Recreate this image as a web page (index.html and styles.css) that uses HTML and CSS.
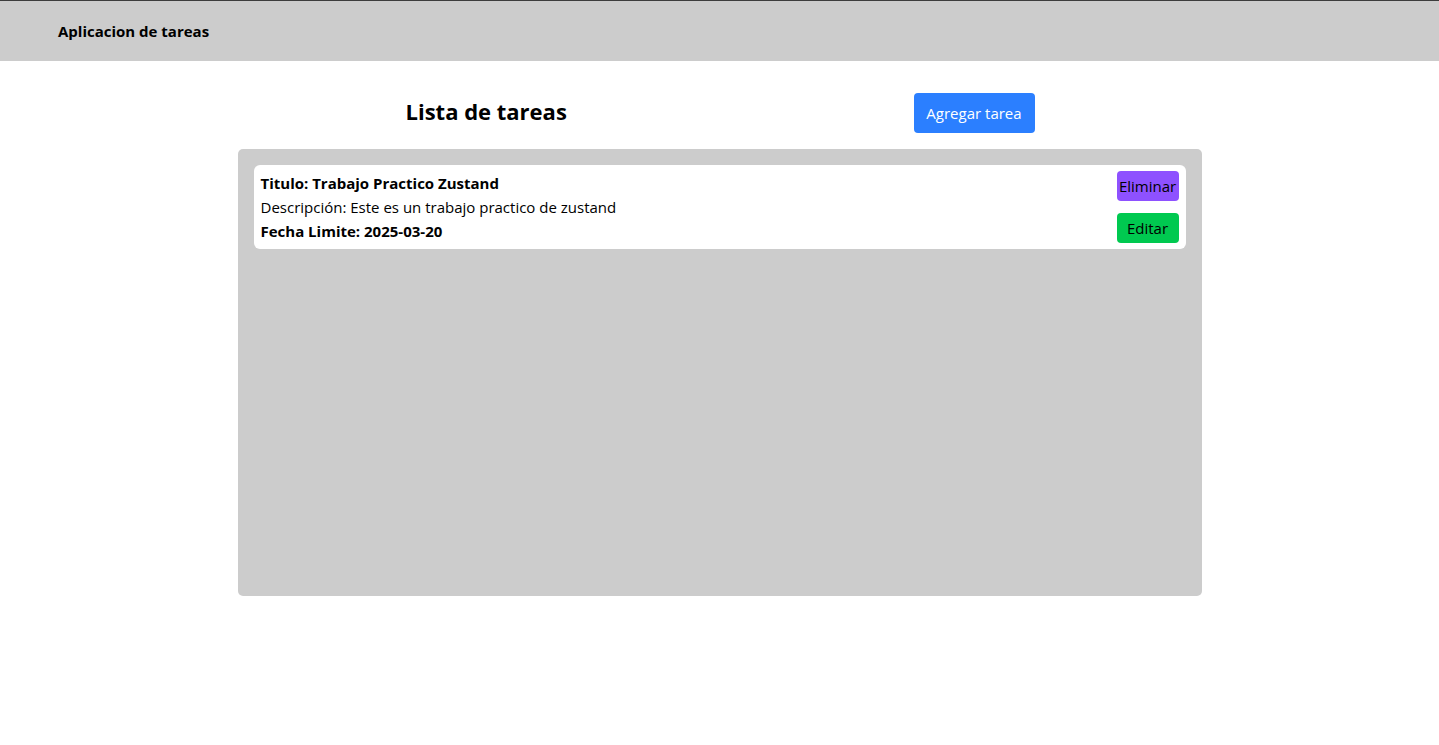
FILE: index.html
```html
<!DOCTYPE html>
<html lang="es">
<head>
<meta charset="utf-8">
<title>Aplicacion de tareas</title>
<link rel="stylesheet" href="styles.css">
</head>
<body>
<header class="topbar">
  <h1 class="brand">Aplicacion de tareas</h1>
</header>
<main class="main">
  <div class="list-head">
    <h2 class="list-title">Lista de tareas</h2>
    <button class="btn btn-add">Agregar tarea</button>
  </div>
  <section class="board">
    <article class="task">
      <div class="task-info">
        <p class="task-title">Titulo: Trabajo Practico Zustand</p>
        <p class="task-desc">Descripción: Este es un trabajo practico de zustand</p>
        <p class="task-date">Fecha Limite: 2025-03-20</p>
      </div>
      <div class="task-actions">
        <button class="btn btn-delete">Eliminar</button>
        <button class="btn btn-edit">Editar</button>
      </div>
    </article>
  </section>
</main>
</body>
</html>
```

FILE: styles.css
```css
* { box-sizing: border-box; }
html, body { margin: 0; padding: 0; }
body {
  font-family: "Open Sans", "Noto Sans", sans-serif;
  color: #000;
  background: #fff;
  font-size: 15px;
  line-height: 24px;
}
.topbar {
  height: 61px;
  border-top: 1px solid #3c3c3c;
  background: #cccccc;
  display: flex;
  align-items: center;
  padding: 0 58px;
}
.brand {
  margin: 0;
  font-size: 15px;
  font-weight: 700;
  line-height: 20px;
}
.main {
  width: 964px;
  margin: 0 auto;
  padding-top: 32px;
}
.list-head {
  display: flex;
  justify-content: space-between;
  align-items: center;
  padding: 0 167px 0 168px;
  margin-bottom: 16px;
}
.list-title {
  margin: 0 0 5px;
  font-size: 22px;
  font-weight: 700;
  line-height: 32px;
}
.btn {
  font-family: inherit;
  border: none;
  border-radius: 4px;
  cursor: pointer;
  font-size: 15px;
  line-height: 24px;
  color: #000;
}
.btn-add {
  background: #2b7fff;
  color: #fff;
  height: 40px;
  width: 121px;
  padding: 0;
}
.board {
  background: #cccccc;
  border-radius: 5px;
  height: 447px;
  padding: 16px;
}
.task {
  background: #fff;
  border-radius: 6px;
  padding: 6px 7px;
  display: flex;
  justify-content: space-between;
}
.task p { margin: 0; }
.task-title, .task-date { font-weight: 700; }
.task-actions {
  display: flex;
  flex-direction: column;
  gap: 12px;
}
.btn-delete, .btn-edit {
  width: 62px;
  height: 30px;
  padding: 0;
}
.btn-delete { background: #8e51ff; }
.btn-edit { background: #00c950; }
```
